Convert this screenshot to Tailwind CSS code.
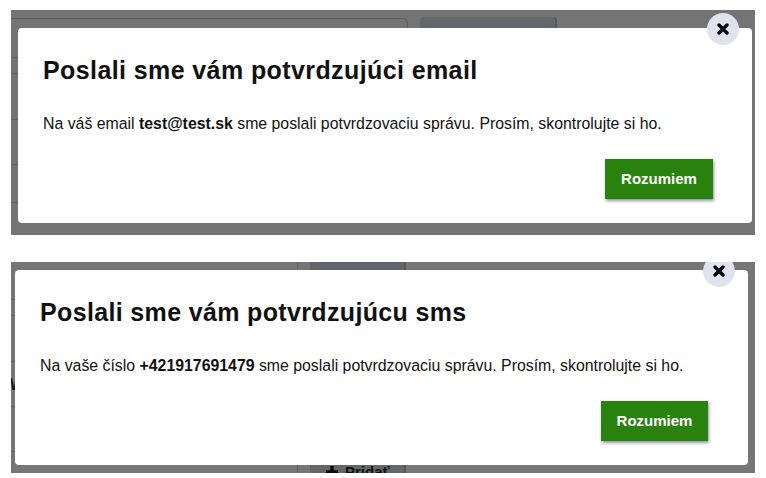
<!doctype html>
<html>
<head>
<meta charset="utf-8">
<script src="https://cdn.jsdelivr.net/npm/@tailwindcss/browser@4"></script>
</head>
<body class="bg-white font-['Liberation_Sans',Arial,sans-serif] text-[#111]">
<div class="h-[478px] w-[766px] overflow-hidden pt-[10px] pl-[11px]">

  <section class="relative h-[225px] w-[744px] bg-[#747474] pt-[18px] pl-[7px]">
    <div class="absolute left-0 top-[8px] h-[22px] w-[397px] rounded-tr-md border-t border-r border-[#5c5c5c]"></div>
    <div class="absolute left-[409px] top-[7px] h-[12px] w-[137px] rounded-t-sm border-r-2 border-[#55565c] bg-[#65666b]"></div>
    <div class="absolute left-0 top-[47px] h-px w-[7px] bg-[#5f5f5f]"></div>
    <div class="absolute left-0 top-[63px] h-px w-[7px] bg-[#5f5f5f]"></div>
    <div class="absolute left-0 top-[109px] h-px w-[7px] bg-[#5f5f5f]"></div>
    <div class="absolute left-0 top-[154px] h-px w-[7px] bg-[#5f5f5f]"></div>
    <div class="absolute left-0 top-[192px] h-px w-[7px] bg-[#5f5f5f]"></div>

    <div class="relative flex h-[195px] w-[734px] flex-col rounded-[4px] bg-white pt-[27px] pl-[25px]">
      <h2 class="text-[25px] leading-[30px] font-bold tracking-[0.4px]">Poslali sme vám potvrdzujúci email</h2>
      <p class="mt-[29px] text-[15.85px] leading-[20px]">Na váš email <b>test@test.sk</b> sme poslali potvrdzovaciu správu. Prosím, skontrolujte si ho.</p>
      <div class="mt-[25px] flex justify-end pr-[39px]">
        <button class="h-[40px] w-[108px] bg-[#2a820e] text-[15px] font-bold text-white shadow-[1px_2px_3px_rgba(60,60,90,0.55)]">Rozumiem</button>
      </div>
      <button class="absolute -top-[15px] right-[13px] flex h-[32px] w-[32px] items-center justify-center rounded-full bg-[#e2e2ee]">
        <svg viewBox="0 0 12 12" class="h-[12px] w-[12px]"><path d="M2 2 10 10M10 2 2 10" stroke="#0a0a0a" stroke-width="3.4" stroke-linecap="round"/></svg>
      </button>
    </div>
  </section>

  <section class="relative mt-[27px] h-[211px] w-[744px] overflow-hidden bg-[#767676] pt-[8px] pl-[4px]">
    <div class="absolute left-[286px] top-0 h-[211px] w-[109px] border-l border-[#5f5f5f] pl-[12px]">
      <div class="h-full border-r-2 border-[#55565c] bg-[#65666b]"></div>
    </div>
    <div class="absolute left-0 top-[37px] h-px w-[4px] bg-[#5f5f5f]"></div>
    <div class="absolute left-0 top-[53px] h-px w-[4px] bg-[#5f5f5f]"></div>
    <div class="absolute left-0 top-[99px] h-px w-[4px] bg-[#5f5f5f]"></div>
    <div class="absolute left-0 top-[144px] h-px w-[4px] bg-[#5f5f5f]"></div>
    <div class="absolute left-0 top-[189px] h-px w-[4px] bg-[#5f5f5f]"></div>
    <span class="absolute -left-[8px] top-[115px] text-[16px] leading-[16px] font-bold text-[#0c1428]">W</span>
    <div class="absolute left-[314px] top-[202px] flex items-center gap-[6px] text-[15px] leading-[16px] font-bold text-[#111]">
      <svg viewBox="0 0 14 14" class="h-[14px] w-[14px]"><path d="M7 1V13M1 7H13" stroke="#0a0a0a" stroke-width="3.4"/></svg>
      <span>Pridať</span>
    </div>

    <div class="relative flex h-[195px] w-[733px] flex-col rounded-[4px] bg-white pt-[27px] pl-[25px]">
      <h2 class="text-[25px] leading-[30px] font-bold tracking-[0.35px]">Poslali sme vám potvrdzujúcu sms</h2>
      <p class="mt-[29px] text-[15.85px] leading-[20px]">Na vaše číslo <b>+421917691479</b> sme poslali potvrdzovaciu správu. Prosím, skontrolujte si ho.</p>
      <div class="mt-[25px] flex justify-end pr-[40px]">
        <button class="h-[40px] w-[107px] bg-[#2a820e] text-[15px] font-bold text-white shadow-[1px_2px_3px_rgba(60,60,90,0.55)]">Rozumiem</button>
      </div>
      <button class="absolute -top-[15px] right-[13px] flex h-[32px] w-[32px] items-center justify-center rounded-full bg-[#e2e2ee]">
        <svg viewBox="0 0 12 12" class="h-[12px] w-[12px]"><path d="M2 2 10 10M10 2 2 10" stroke="#0a0a0a" stroke-width="3.4" stroke-linecap="round"/></svg>
      </button>
    </div>
  </section>
</div>
</body>
</html>
